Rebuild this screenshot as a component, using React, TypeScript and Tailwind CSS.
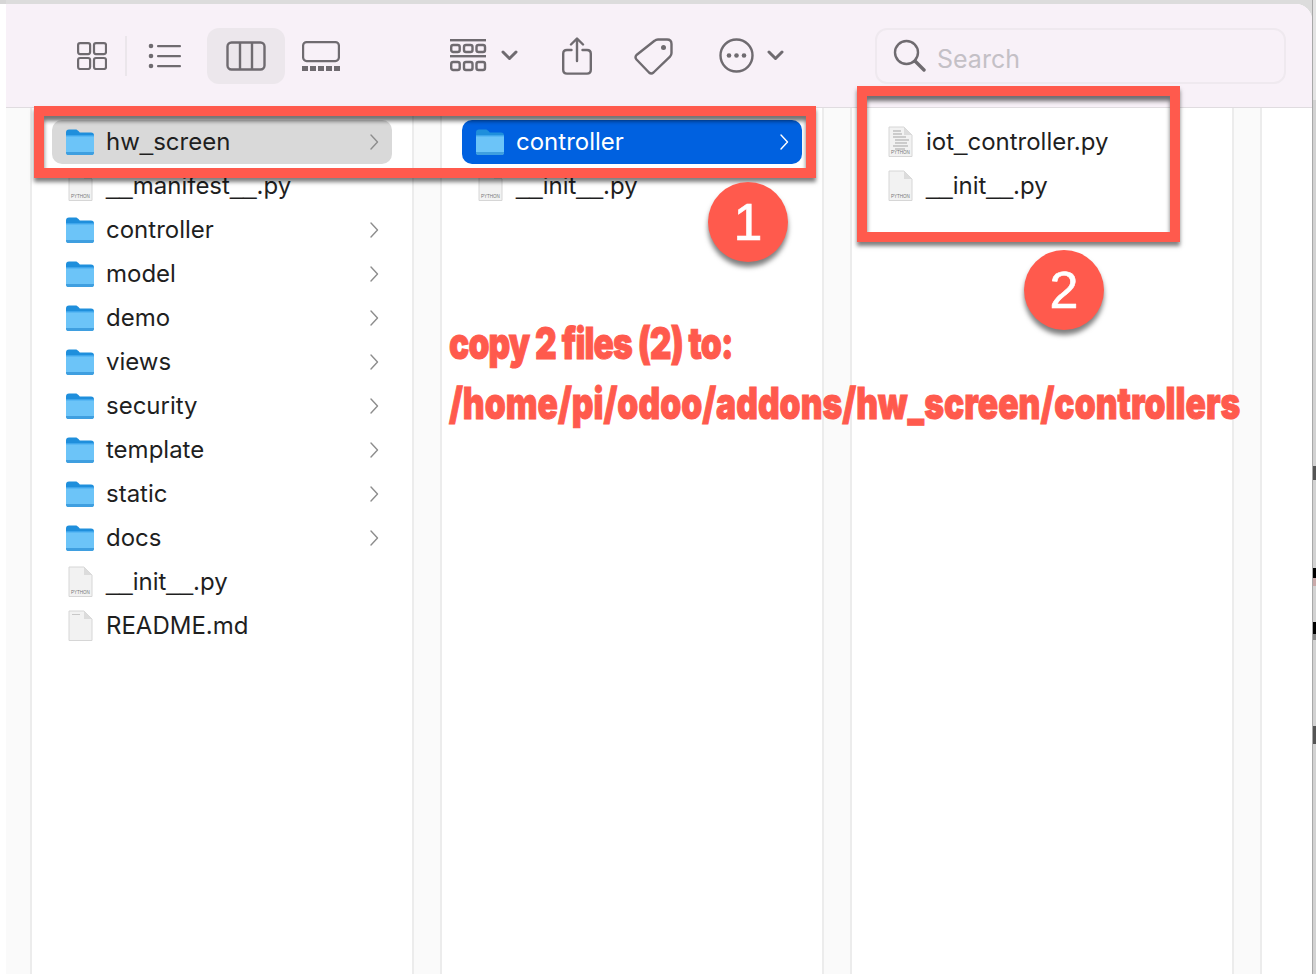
import React from "react";

const INK = "#6f6b70";
const SANS = "font-['Inter','Liberation_Sans',sans-serif]";

function Folder({ className = "" }: { className?: string }) {
  return (
    <svg width="30" height="28" viewBox="0 0 30 28" className={className}>
      <path d="M1 4.500C1 2.500 2 1.500 4 1.500h6.500c1.400 0 2 .6 3 1.600L14.800 4.500H26c2 0 3 1 3 3V8H1z" fill="#1f8fdc" />
      <path d="M1 7.500h28V24.500c0 1.500-1 2.500-2.500 2.500h-23C2 27 1 26 1 24.500z" fill="#6cc4f8" />
      <path d="M1 7h28v1.400H1z" fill="#3ea6ec" />
      <path d="M1 24h28v.7c0 1.400-1 2.300-2.500 2.300h-23C2 27 1 26.100 1 24.700z" fill="#3f9fe0" />
    </svg>
  );
}

function FileIcon({ kind }: { kind: "py" | "code" | "md" }) {
  return (
    <svg width="27" height="32" viewBox="0 0 27 32">
      <path d="M2 1h15l8 8v21.500H2z" fill="#f2f2f2" stroke="#d6d6d6" strokeWidth="1" />
      <path d="M17 1v8h8z" fill="#dcdcdc" />
      {kind === "code" && (
        <g stroke="#a5a5a5" strokeWidth="1">
          <path d="M6 5h8M6 8h9M6 11h13M8 14h14M8 17h12M6 20h15M8 23h10" />
        </g>
      )}
      {kind === "md" && <path d="M5 4.500h8" stroke="#c8c8c8" strokeWidth="1" />}
      {kind !== "md" && (
        <text x="13.500" y="28" textAnchor="middle" fontSize="4.500" fill="#777" fontFamily="Liberation Sans, sans-serif">
          PYTHON
        </text>
      )}
    </svg>
  );
}

function Chevron({ light = false }: { light?: boolean }) {
  return (
    <svg width="10" height="18" viewBox="0 0 10 18" className="ml-auto">
      <path d="M2 2l6.500 7L2 16" fill="none" stroke={light ? "#ffffff" : "#8d8d8d"} strokeWidth="1.400" strokeLinecap="round" strokeLinejoin="round" />
    </svg>
  );
}

/* The reference's underscores are wider and join up: Liberation Sans' do the same. */
function Label({ text }: { text: string }) {
  const parts = text.split(/(_+)/);
  return (
    <span className="text-[24px] leading-none">
      {parts.map((p, i) =>
        p.startsWith("_") ? (
          <span key={i} className="font-['Liberation_Sans',sans-serif]">{p}</span>
        ) : (
          <span key={i}>{p}</span>
        )
      )}
    </span>
  );
}

type RowProps = {
  label: string;
  icon: "folder" | "py" | "code" | "md";
  state?: "grey" | "blue";
};

function Row({ label, icon, state }: RowProps) {
  const bg = state === "grey" ? "bg-[#d9d9d9]" : state === "blue" ? "bg-[#0061e0]" : "";
  const text = state === "blue" ? "text-white" : "text-[#1f1f1f]";
  return (
    <div className={`flex items-center h-[44px] w-[340px] rounded-[10px] ${bg} ${text}`}>
      {icon === "folder" ? (
        <Folder className="ml-[13px] mr-[11px] shrink-0" />
      ) : (
        <div className="ml-[14px] mr-[12px] w-[28px] flex justify-center shrink-0">
          <FileIcon kind={icon} />
        </div>
      )}
      <Label text={label} />
      {icon === "folder" && (
        <span className="ml-auto mr-[13px] flex">
          <Chevron light={state === "blue"} />
        </span>
      )}
    </div>
  );
}

function Column({ children }: { children: React.ReactNode }) {
  return <div className="w-[380px] shrink-0 pt-[12px] pl-[20px] bg-white">{children}</div>;
}

function Gutter({ className = "w-[30px]" }: { className?: string }) {
  return <div className={`shrink-0 bg-[#fafafa] border-x-2 border-[#ececec] ${className}`} />;
}

function Toolbar() {
  return (
    <div className="h-[104px] shrink-0 bg-[#f8f1f8] border-b border-[#e0dce0] rounded-tr-[16px] flex items-center pl-[71px]">
      {/* icon view */}
      <svg width="30" height="28" viewBox="0 0 30 28">
        <g fill="none" stroke={INK} strokeWidth="2.200">
          <rect x="1.100" y="1.100" width="12" height="11" rx="2" />
          <rect x="17" y="1.100" width="12" height="11" rx="2" />
          <rect x="1.100" y="16" width="12" height="11" rx="2" />
          <rect x="17" y="16" width="12" height="11" rx="2" />
        </g>
      </svg>
      <div className="w-[2px] h-[40px] bg-[#ebe6eb] ml-[18px]" />
      {/* list view */}
      <svg width="34" height="26" viewBox="0 0 34 26" className="ml-[21px]">
        <g fill={INK}>
          <circle cx="3" cy="3" r="2.300" />
          <circle cx="3" cy="13" r="2.300" />
          <circle cx="3" cy="23" r="2.300" />
          <rect x="9" y="2" width="24" height="2.200" rx="1" />
          <rect x="9" y="12" width="24" height="2.200" rx="1" />
          <rect x="9" y="22" width="24" height="2.200" rx="1" />
        </g>
      </svg>
      {/* column view */}
      <div className="ml-[25px] w-[78px] h-[56px] rounded-[12px] bg-[#ece7ec] flex items-center justify-center">
        <svg width="40" height="30" viewBox="0 0 40 30">
          <g fill="none" stroke={INK} strokeWidth="2.400">
            <rect x="1.500" y="1.500" width="37" height="27" rx="4" />
            <path d="M14 1.500v27M26 1.500v27" />
          </g>
        </svg>
      </div>
      {/* gallery view */}
      <svg width="38" height="30" viewBox="0 0 38 30" className="ml-[17px]">
        <rect x="1.100" y="1.100" width="35.800" height="19" rx="3.500" fill="none" stroke={INK} strokeWidth="2.200" />
        <g fill={INK}>
          <rect x="0" y="25" width="6" height="5" />
          <rect x="8" y="25" width="6" height="5" />
          <rect x="16" y="25" width="6" height="5" />
          <rect x="24" y="25" width="6" height="5" />
          <rect x="32" y="25" width="6" height="5" />
        </g>
      </svg>
      {/* group */}
      <svg width="37" height="33" viewBox="0 0 37 33" className="ml-[110px]">
        <g fill={INK}>
          <rect x="0" y="0" width="36" height="2.400" />
          <rect x="0" y="16" width="36" height="2.400" />
        </g>
        <g fill="none" stroke={INK} strokeWidth="2.400">
          <rect x="1.200" y="6" width="8.500" height="7" rx="2" />
          <rect x="14" y="6" width="8.500" height="7" rx="2" />
          <rect x="26.500" y="6" width="8.500" height="7" rx="2" />
          <rect x="1.200" y="23" width="8.500" height="8" rx="2" />
          <rect x="14" y="23" width="8.500" height="8" rx="2" />
          <rect x="26.500" y="23" width="8.500" height="8" rx="2" />
        </g>
      </svg>
      <svg width="17" height="11" viewBox="0 0 17 11" className="ml-[14px]">
        <path d="M2 2l6.500 6.500L15 2" fill="none" stroke={INK} strokeWidth="3" strokeLinecap="round" strokeLinejoin="round" />
      </svg>
      {/* share */}
      <svg width="30" height="38" viewBox="0 0 30 38" className="ml-[44px]">
        <g fill="none" stroke={INK} strokeWidth="2.400" strokeLinecap="round" strokeLinejoin="round">
          <path d="M9.500 13H5c-2.500 0-3.800 1.300-3.800 3.800v16c0 2.500 1.300 3.800 3.800 3.800h20c2.500 0 3.800-1.300 3.800-3.800v-16c0-2.500-1.300-3.800-3.800-3.800h-4.500" />
          <path d="M15 24V2M9 7.500L15 1.500l6 6" />
        </g>
      </svg>
      {/* tag */}
      <svg width="40" height="38" viewBox="0 0 40 38" className="ml-[42px]">
        <path d="M24 2.500h9c2.800 0 4.500 1.700 4.500 4.500v9c0 1.500-.5 2.600-1.500 3.600L19.500 35.500c-1.500 1.300-3 1.300-4.500 0L2.500 22.500c-1.300-1.500-1.300-3 0-4.500L20.500 3.800C21.500 2.900 22.600 2.500 24 2.500z" fill="none" stroke={INK} strokeWidth="2.400" strokeLinejoin="round" />
        <circle cx="29.500" cy="10.500" r="2.500" fill={INK} />
      </svg>
      {/* more */}
      <svg width="35" height="35" viewBox="0 0 35 35" className="ml-[45px]">
        <circle cx="17.500" cy="17.500" r="16" fill="none" stroke={INK} strokeWidth="2.400" />
        <g fill={INK}>
          <circle cx="10" cy="17.500" r="2.300" />
          <circle cx="17.500" cy="17.500" r="2.300" />
          <circle cx="25" cy="17.500" r="2.300" />
        </g>
      </svg>
      <svg width="17" height="11" viewBox="0 0 17 11" className="ml-[13px]">
        <path d="M2 2l6.500 6.500L15 2" fill="none" stroke={INK} strokeWidth="3" strokeLinecap="round" strokeLinejoin="round" />
      </svg>
      {/* search */}
      <div className="ml-[91px] w-[411px] h-[56px] rounded-[12px] border-2 border-[#efe9ef] flex items-center pl-[16px]">
        <svg width="33" height="33" viewBox="0 0 33 33">
          <circle cx="13.500" cy="13.500" r="11.500" fill="none" stroke={INK} strokeWidth="2.400" />
          <path d="M22 22l9 9" stroke={INK} strokeWidth="3.400" strokeLinecap="round" />
        </svg>
        <span className="ml-[11px] mt-[7px] text-[25px] leading-none text-[#c4c0c6]">Search</span>
      </div>
    </div>
  );
}

function Badge({ n, className }: { n: string; className: string }) {
  return (
    <div className={`absolute w-[80px] h-[80px] rounded-full bg-[#ff5a4d] shadow-[0_5px_5px_rgba(0,0,0,0.5)] flex items-center justify-center text-white text-[52px] leading-none [-webkit-text-stroke:0.6px_#ffffff] font-['Liberation_Sans',sans-serif] ${className}`}>
      {n}
    </div>
  );
}

function RedBox({ className }: { className: string }) {
  return (
    <div className={`absolute border-[10px] border-[#ff5a4d] shadow-[0_4px_4px_rgba(0,0,0,0.5),inset_0_5px_4px_rgba(0,0,0,0.55)] ${className}`} />
  );
}

export default function App() {
  return (
    <div className={`relative w-[1316px] h-[974px] overflow-hidden bg-white flex ${SANS}`}>
      <div className="w-[6px] shrink-0 border-t-4 border-[#d6d6d6]" />
      <div className="w-[1306px] shrink-0 bg-[#dcdcdc] pt-[4px] flex flex-col">
        <div className="flex-1 flex flex-col rounded-tr-[16px] bg-white min-h-0">
          <Toolbar />
          <div className="flex-1 flex min-h-0">
            <Gutter className="w-[26px] border-l-0" />
            <Column>
              <Row label="hw_screen" icon="folder" state="grey" />
              <Row label="__manifest__.py" icon="py" />
              <Row label="controller" icon="folder" />
              <Row label="model" icon="folder" />
              <Row label="demo" icon="folder" />
              <Row label="views" icon="folder" />
              <Row label="security" icon="folder" />
              <Row label="template" icon="folder" />
              <Row label="static" icon="folder" />
              <Row label="docs" icon="folder" />
              <Row label="__init__.py" icon="py" />
              <Row label="README.md" icon="md" />
            </Column>
            <Gutter />
            <Column>
              <Row label="controller" icon="folder" state="blue" />
              <Row label="__init__.py" icon="py" />
            </Column>
            <Gutter />
            <Column>
              <Row label="iot_controller.py" icon="code" />
              <Row label="__init__.py" icon="py" />
            </Column>
            <Gutter />
            <div className="flex-1 bg-white" />
          </div>
        </div>
      </div>
      {/* desktop behind the window, right edge */}
      <div className="w-[4px] shrink-0 bg-[#d2d2d2] flex flex-col border-l border-[#a8a8a8]">
        <div className="h-[100px] bg-[#e4e4e4]" />
        <div className="h-[366px]" />
        <div className="h-[14px] bg-[#555]" />
        <div className="h-[88px]" />
        <div className="h-[10px] bg-black" />
        <div className="h-[8px] bg-[#c9a9a9]" />
        <div className="h-[36px]" />
        <div className="h-[12px] bg-black" />
        <div className="h-[6px] bg-[#888]" />
        <div className="h-[86px]" />
        <div className="h-[18px] bg-[#555]" />
      </div>

      {/* annotations drawn over the screenshot */}
      <RedBox className="left-[34px] top-[106px] w-[782px] h-[72px]" />
      <RedBox className="left-[857px] top-[86px] w-[323px] h-[156px]" />
      <Badge n="1" className="left-[708px] top-[182px]" />
      <Badge n="2" className="left-[1024px] top-[250px]" />
      <div className="absolute left-[449px] top-[313px] origin-left scale-x-[0.765] text-[#ff5a4d] font-black text-[44px] leading-[60px] whitespace-nowrap [-webkit-text-stroke:1px_#ff5a4d]">
        <div className="tracking-[-1.2px]">copy 2 files (2) to:</div>
        <div>/home/pi/odoo/addons/hw_screen/controllers</div>
      </div>
    </div>
  );
}
